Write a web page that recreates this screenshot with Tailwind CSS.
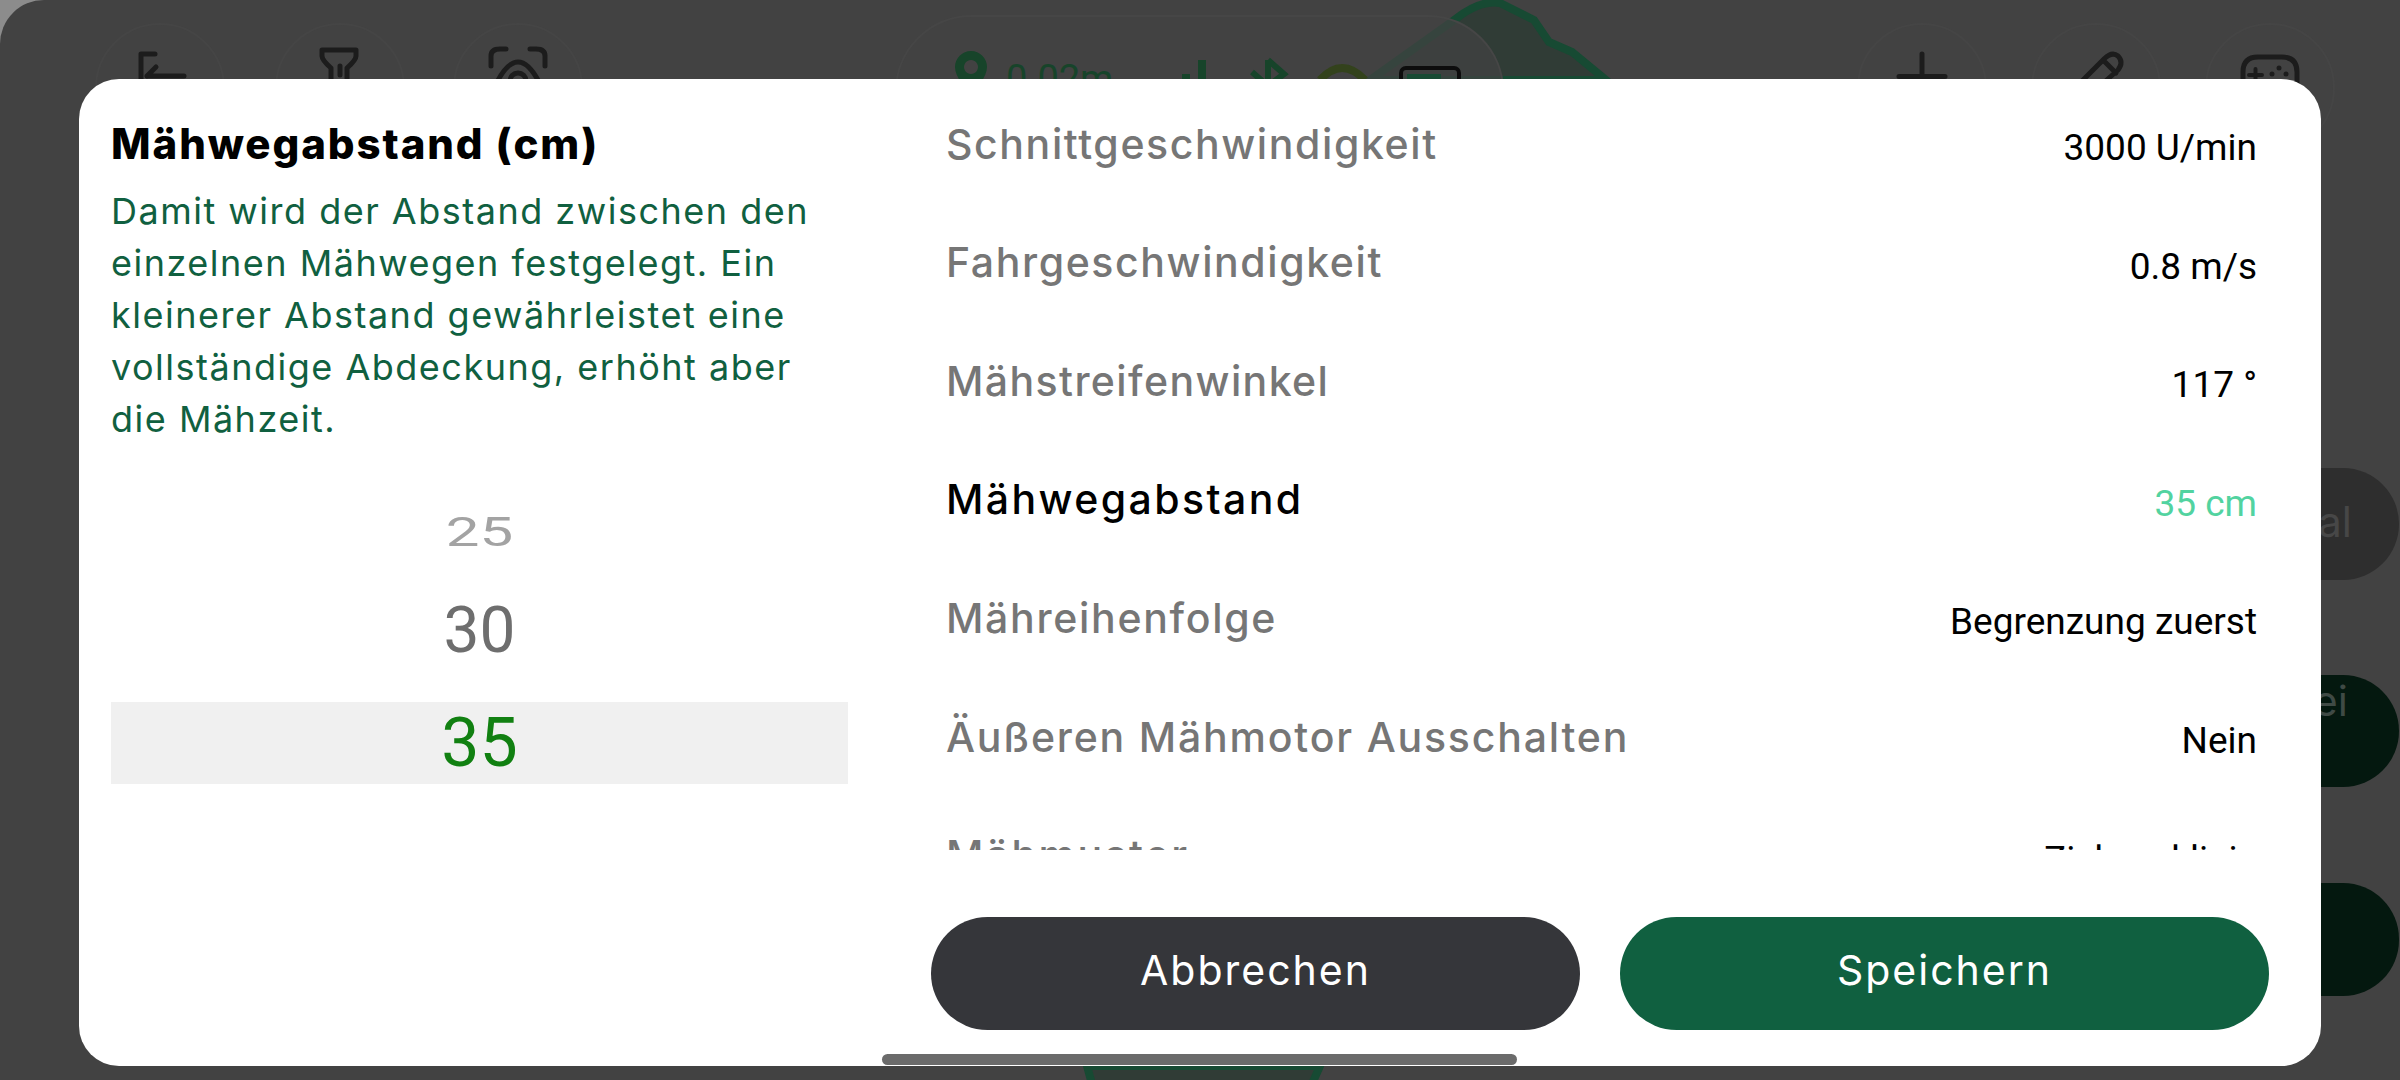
<!doctype html>
<html lang="de">
<head>
<meta charset="utf-8">
<script src="https://cdn.jsdelivr.net/npm/@tailwindcss/browser@4"></script>
<title>Mähwegabstand</title>
</head>
<body class="m-0 bg-[#8c8c8c]">
<div class="relative w-[2400px] h-[1080px] overflow-hidden bg-[#424242] rounded-tl-[44px] font-['Inter','Liberation_Sans',sans-serif]">

  <!-- dimmed map shape and page controls behind the dialog -->
  <svg class="absolute inset-0" width="2400" height="1080" viewBox="0 0 2400 1080" fill="none">
    <path d="M1370 80 L1457 18 Q1480 0 1500 3 L1534 20 L1549 42 L1572 52 L1606 80 Z" fill="#303c36" stroke="#174a33" stroke-width="8"/>
    <path d="M1087 1066 L1092 1084 L1312 1084 L1320 1066 Z" fill="#303c36" stroke="#174a33" stroke-width="8"/>
    <g stroke="#454545" stroke-width="2">
      <circle cx="1922" cy="88" r="64"/><circle cx="2096" cy="88" r="64"/><circle cx="2270" cy="88" r="64"/>
      <circle cx="160" cy="88" r="64"/><circle cx="340" cy="88" r="64"/><circle cx="518" cy="88" r="64"/>
    </g>
    <!-- left icons -->
    <g stroke="#1c1c1c" stroke-width="5" stroke-linecap="round" stroke-linejoin="round">
      <path d="M155 54 H141 V84"/><path d="M184 76 H147 M156 67 L147 76"/>
      <path d="M322 50 H356 V56 Q356 60 347 68 V84 M322 50 V56 Q322 60 331 68 V84 M340 66 V75"/>
      <path d="M491 66 V56 Q491 49 500 49 H506 M545 66 V56 Q545 49 536 49 H530"/>
      <path d="M497 82 Q518 42 539 82"/><circle cx="518" cy="81" r="8"/>
      <!-- right icons -->
      <path d="M1922 54 V78 M1899 76.5 H1945"/>
      <path d="M2081 82 L2104 59 Q2112 51 2118 56 Q2124 62 2118 70 L2100 86 M2103 60 L2116 73"/>
      <path d="M2243 84 V72 Q2243 57 2258 57 H2282 Q2297 57 2297 72 V84"/>
      <path d="M2249 75 H2262 M2255.500 69 V81" stroke-width="4"/>
    </g>
    <g fill="#1c1c1c"><circle cx="2279" cy="68" r="2.500"/><circle cx="2272" cy="74" r="2.500"/><circle cx="2286" cy="74" r="2.500"/></g>
    <!-- status pill -->
    <rect x="896" y="16" width="607" height="150" rx="76" fill="#424242" fill-opacity=".72" stroke="#464646" stroke-width="2"/>
    <path d="M971 51 a16 16 0 0 1 16 16 c0 10 -10 20 -16 30 c-6 -10 -16 -20 -16 -30 a16 16 0 0 1 16 -16 Z M971 60 a7 7 0 1 0 .01 0 Z" fill="#17442a" fill-rule="evenodd"/>
    <path d="M1186 90 V74 M1202 90 V60" stroke="#17442a" stroke-width="8"/>
    <path d="M1252 72 L1268 86 M1268 60 V90 M1268 60 L1284 74 L1268 86" stroke="#17442a" stroke-width="6"/>
    <path d="M1320 80 Q1342 56 1365 80" stroke="#33421c" stroke-width="8"/>
    <rect x="1401" y="68" width="58" height="40" rx="5" stroke="#0d0d0d" stroke-width="4"/>
    <rect x="1407" y="74" width="34" height="28" fill="#174a33"/>
    <text x="1006" y="92" fill="#17442a" font-family="Roboto" font-size="38">0.02m</text>
  </svg>

  <!-- pills at the right edge -->
  <div class="absolute left-[2200px] top-[468px] w-[199px] flex flex-col">
    <div class="h-[112px] pb-[5px] rounded-r-[56px] bg-[#2e2e2e] flex items-center justify-end pr-[47px] text-[#474747] text-[42px]">al</div>
    <div class="h-[112px] mt-[95px] rounded-r-[56px] bg-[#04180f] flex justify-end pr-[51px] pt-[3px] text-[#3f4a45] text-[42px] leading-[46px]">ei</div>
    <div class="h-[113px] mt-[96px] rounded-r-[56px] bg-[#04180f]"></div>
  </div>

  <!-- dialog -->
  <div class="absolute left-[79px] top-[79px] w-[2242px] h-[987px] bg-white rounded-[40px] flex overflow-hidden">
    <div class="w-[770px] pl-[32px] shrink-0 flex flex-col">
      <h1 class="mt-[40px] text-[42px] leading-[50px] font-extrabold text-black tracking-[1.9px] whitespace-nowrap">Mähwegabstand (cm)</h1>
      <p class="mt-[16px] w-[737px] text-[36px] leading-[52px] text-[#106040] tracking-[1.5px] whitespace-nowrap">Damit wird der Abstand zwischen den<br>einzelnen Mähwegen festgelegt. Ein<br>kleinerer Abstand gewährleistet eine<br>vollständige Abdeckung, erhöht aber<br>die Mähzeit.</p>
      <div class="mt-[61px] w-[737px] flex flex-col items-center font-['Roboto',sans-serif]">
        <div class="h-[53px] flex items-center text-[60px] leading-none text-[#a3a3a3] scale-y-[0.68]">25</div>
        <div class="h-[143px] flex items-center text-[64px] leading-none text-[#6e6e6e]">30</div>
        <div class="h-[82px] w-full bg-[#f0f0f0] flex items-center justify-center text-[68px] leading-none text-[#118011]">35</div>
      </div>
    </div>
    <div class="ml-[82px] w-[1338px] flex flex-col">
      <div class="h-[771px] overflow-hidden pt-[6px] pl-[15px] pr-[12px]">
        <div class="h-[118.6px] flex justify-between items-center"><span class="text-[41px] tracking-[1.6px] font-medium text-[#767676]">Schnittgeschwindigkeit</span><span class="pt-[7px] font-['Roboto',sans-serif] text-[37px] text-black">3000 U/min</span></div>
        <div class="h-[118.6px] flex justify-between items-center"><span class="text-[41px] tracking-[1.6px] font-medium text-[#767676]">Fahrgeschwindigkeit</span><span class="pt-[7px] font-['Roboto',sans-serif] text-[37px] text-black">0.8 m/s</span></div>
        <div class="h-[118.6px] flex justify-between items-center"><span class="text-[41px] tracking-[1.4px] font-medium text-[#767676]">Mähstreifenwinkel</span><span class="pt-[7px] font-['Roboto',sans-serif] text-[37px] text-black">117 °</span></div>
        <div class="h-[118.6px] flex justify-between items-center"><span class="text-[41px] tracking-[2.4px] font-medium text-black">Mähwegabstand</span><span class="pt-[7px] font-['Roboto',sans-serif] text-[37px] text-[#52d3a0]">35 cm</span></div>
        <div class="h-[118.6px] flex justify-between items-center"><span class="text-[41px] tracking-[1.7px] font-medium text-[#767676]">Mähreihenfolge</span><span class="pt-[7px] font-['Roboto',sans-serif] text-[37px] text-black">Begrenzung zuerst</span></div>
        <div class="h-[118.6px] flex justify-between items-center"><span class="text-[41px] tracking-[1.8px] font-medium text-[#767676]">Äußeren Mähmotor Ausschalten</span><span class="pt-[7px] font-['Roboto',sans-serif] text-[37px] text-black">Nein</span></div>
        <div class="h-[118.6px] flex justify-between items-center"><span class="text-[41px] tracking-[2.4px] font-medium text-[#767676]">Mähmuster</span><span class="pt-[7px] font-['Roboto',sans-serif] text-[37px] text-black">Zickzacklinie</span></div>
      </div>
      <div class="mt-[67px] flex gap-[40px]">
        <button class="w-[649px] h-[113px] pb-[5px] rounded-full bg-[#35363a] text-white text-[41px] tracking-[2px]">Abbrechen</button>
        <button class="w-[649px] h-[113px] pb-[5px] rounded-full bg-[#106040] text-white text-[41px] tracking-[2px]">Speichern</button>
      </div>
    </div>
  </div>

  <!-- system gesture bar -->
  <div class="absolute left-[882px] top-[1054px] w-[635px] h-[11px] rounded-full bg-[#6b6b6b]"></div>
</div>
</body>
</html>
